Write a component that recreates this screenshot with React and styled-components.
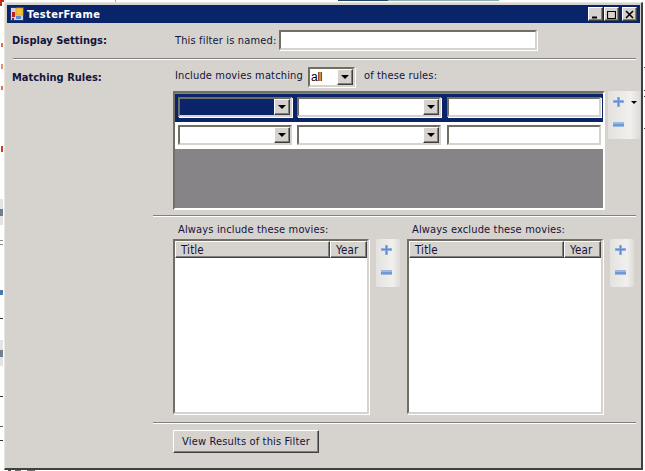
import styled, { createGlobalStyle, css } from 'styled-components'

const GlobalStyle = createGlobalStyle`
	html, body {
		margin: 0;
		height: 100%;
		background: #fff;
		overflow: hidden;
	}
	#root {
		height: 100%;
	}
`

const sunken = css`
	background: #fff;
	border-style: solid;
	border-width: 2px;
	border-color: #716f64 #d6d3ce #d6d3ce #716f64;
	box-shadow: 1px 1px 0 #fff;
	box-sizing: border-box;
`

const raised = css`
	background: #d6d3ce;
	box-sizing: border-box;
	border-style: solid;
	border-width: 1px;
	border-color: #fff #404040 #404040 #fff;
	box-shadow: inset -1px -1px 0 #808080;
`

const Desktop = styled.div`
	position: relative;
	height: 471px;
	width: 645px;
	overflow: hidden;
	padding: 2px 1px 0 4px;
	box-sizing: border-box;
	font-family: "DejaVu Sans", sans-serif;
	font-size: 11px;
	font-stretch: condensed;
	letter-spacing: 0.15px;
	color: #14143a;
`

// bits of whatever window is lying behind this one
const Scrap = styled.i`
	position: absolute;
	left: ${p => p.$x}px;
	top: ${p => p.$y}px;
	width: ${p => p.$w}px;
	height: ${p => p.$h}px;
	background: ${p => p.$c};
`

const scraps = [
	{ x: 0, y: 0, w: 4, h: 2, c: '#c03010' },
	{ x: 0, y: 2, w: 2, h: 4, c: '#c03010' },
	{ x: 1, y: 43, w: 2, h: 4, c: '#d87050' },
	{ x: 1, y: 64, w: 2, h: 5, c: '#e09078' },
	{ x: 1, y: 86, w: 2, h: 4, c: '#d87050' },
	{ x: 1, y: 146, w: 2, h: 6, c: '#c84020' },
	{ x: 0, y: 199, w: 3, h: 26, c: '#e4e4e4' },
	{ x: 0, y: 209, w: 3, h: 7, c: '#708090' },
	{ x: 0, y: 240, w: 3, h: 1, c: '#909090' },
	{ x: 0, y: 244, w: 3, h: 1, c: '#909090' },
	{ x: 0, y: 290, w: 3, h: 5, c: '#5078a8' },
	{ x: 0, y: 318, w: 3, h: 1, c: '#303030' },
	{ x: 0, y: 340, w: 3, h: 26, c: '#e4e4e4' },
	{ x: 0, y: 350, w: 3, h: 7, c: '#708090' },
	{ x: 0, y: 396, w: 3, h: 1, c: '#303030' },
	{ x: 0, y: 426, w: 3, h: 1, c: '#606060' },
	{ x: 0, y: 440, w: 3, h: 1, c: '#303030' },
	{ x: 115, y: 0, w: 1, h: 2, c: '#a0a0a0' },
	{ x: 338, y: 0, w: 50, h: 1, c: '#204868' },
	{ x: 388, y: 0, w: 111, h: 1, c: '#8ab0b8' },
	{ x: 644, y: 67, w: 1, h: 1, c: '#404040' },
	{ x: 644, y: 90, w: 1, h: 1, c: '#404040' },
	{ x: 644, y: 96, w: 1, h: 1, c: '#404040' },
	{ x: 644, y: 128, w: 1, h: 1, c: '#404040' },
	{ x: 8, y: 470, w: 3, h: 1, c: '#505050' },
	{ x: 15, y: 470, w: 6, h: 1, c: '#707070' },
	{ x: 27, y: 470, w: 8, h: 1, c: '#707070' },
]

const Window = styled.div`
	position: relative;
	width: 639px;
	height: 468px;
	box-sizing: border-box;
	background: #d6d3ce;
	border-style: solid;
	border-width: 1px 2px 2px 1px;
	border-color: #e8e6e0 #404040 #404040 #e8e6e0;
	padding: 2px 1px 0 2px;
	display: flex;
	flex-direction: column;
`

const TitleBar = styled.div`
	height: 18px;
	background: #0a246a;
	display: flex;
	align-items: center;
	padding: 0 3px 0 3px;
	gap: 3px;
	flex: none;
`

const AppTitle = styled.span`
	flex: 1;
	color: #fff;
	font-weight: bold;
	font-size: 11px;
	letter-spacing: 0.4px;
`

const CaptionGroup = styled.div`
	display: flex;
	gap: 1px;
`

const Caption = styled.button`
	${raised}
	width: 15px;
	height: 14px;
	padding: 0;
	margin-left: ${p => (p.$gap ? 2 : 0)}px;
	display: flex;
	align-items: center;
	justify-content: center;
`

const Row = styled.div`
	display: flex;
	align-items: center;
	padding-left: 5px;
	padding-top: ${p => p.$top}px;
`

const Heading = styled.span`
	width: 163px;
	flex: none;
	font-weight: bold;
	font-size: 11px;
	letter-spacing: 0;
`

const Label = styled.span`
	white-space: nowrap;
	margin-left: ${p => p.$left || 0}px;
	margin-bottom: ${p => p.$lift || 0}px;
`

const TextInput = styled.div`
	${sunken}
	width: ${p => p.$w}px;
	height: ${p => p.$h || 20}px;
	margin-left: ${p => p.$left || 0}px;
	flex: none;
`

const Divider = styled.div`
	height: 1px;
	background: #808080;
	border-bottom: 1px solid #fff;
	margin-left: ${p => p.$left}px;
	margin-right: 4px;
	margin-top: ${p => p.$top}px;
`

const Dropdown = styled.div`
	${sunken}
	width: ${p => p.$w}px;
	height: 20px;
	margin-left: ${p => p.$left || 0}px;
	display: flex;
	align-items: stretch;
	background: ${p => (p.$selected ? '#0a246a' : '#fff')};
	flex: none;
	padding: 0;
	font-family: "Liberation Sans", sans-serif;
	font-size: 12px;
	font-stretch: normal;
	letter-spacing: -0.2px;
	color: #000;
`

const DropValue = styled.span`
	flex: 1;
	padding: 1px 0 0 1px;
`

const DropButton = styled.span`
	${raised}
	width: 16px;
	display: flex;
	align-items: center;
	justify-content: center;
	&::before {
		content: "";
		border-style: solid;
		border-width: 4px 4px 0;
		border-color: #000 transparent transparent;
	}
`

const RulesArea = styled.div`
	display: flex;
	padding-left: 166px;
	margin-top: 4px;
`

const RulesPanel = styled.div`
	width: 432px;
	height: 119px;
	flex: none;
	box-sizing: border-box;
	background: #868486;
	border-style: solid;
	border-width: 2px;
	border-color: #716f64 #fff #fff #716f64;
	padding-top: 1px;
`

const RuleRow = styled.div`
	height: ${p => (p.$selected ? 28 : 27)}px;
	box-sizing: border-box;
	display: flex;
	gap: 5px;
	padding: 3px 0 0 3px;
	background: ${p => (p.$selected ? '#0a246a' : '#fff')};
`

const Tools = styled.div`
	position: relative;
	width: ${p => p.$w}px;
	height: 48px;
	flex: none;
	margin-left: ${p => p.$left}px;
	border-radius: 2px;
	background: linear-gradient(90deg, #e4e2de, #f2f0ee 70%, #dedcd8);
	display: flex;
	flex-direction: column;
	padding: 6px 0 0 5px;
	box-sizing: border-box;
	gap: 15px;
`

const MenuArrow = styled.span`
	position: absolute;
	top: 10px;
	right: 3px;
	border-style: solid;
	border-width: 3px 3px 0;
	border-color: #000 transparent transparent;
`

const ListsRow = styled.div`
	display: flex;
	padding-left: 166px;
	margin-top: 6px;
`

const ListColumn = styled.div`
	display: flex;
	flex-direction: column;
	width: 196px;
	flex: none;
	margin-left: ${p => p.$left || 0}px;
`

const ListCaption = styled.span`
	padding-left: 5px;
	height: 16px;
	line-height: 14px;
`

const ListBox = styled.div`
	${sunken}
	height: 175px;
`

const ListHeader = styled.div`
	display: flex;
	height: 17px;
	background: #d6d3ce;
`

const HeaderCell = styled.div`
	${raised}
	padding: 1px 0 0 5px;
	font-size: 11.5px;
	flex: ${p => (p.$w ? `0 0 ${p.$w}px` : 1)};
`

const ToolsOffset = styled.div`
	padding-top: 16px;
	flex: none;
`

const ActionButton = styled.button`
	${raised}
	width: 146px;
	height: 23px;
	margin: 6px 0 0 166px;
	padding: 0;
	font: inherit;
	font-stretch: condensed;
	letter-spacing: inherit;
	color: #14143a;
`

const PlusIcon = () => (
	<svg width="11" height="10" viewBox="0 0 11 10" style={{ display: 'block' }}>
		<path d="M4 0h3v3h4v3H7v4H4V6H0V3h4z" fill="#8fb0e0" />
		<path d="M5.5 1v8M1 4.5h9" stroke="#5f8ace" strokeWidth="1" fill="none" />
	</svg>
)

const MinusIcon = () => (
	<svg width="11" height="5" viewBox="0 0 11 5" style={{ display: 'block' }}>
		<rect width="11" height="5" fill="#9ab8e4" />
		<rect y="2" width="11" height="2" fill="#7098d4" />
	</svg>
)

const AppIcon = () => (
	<svg width="14" height="14" viewBox="0 0 14 14" style={{ display: 'block' }}>
		<rect width="14" height="14" fill="#d6d3ce" />
		<rect x="0.5" y="0.5" width="13" height="13" fill="none" stroke="#1a3a7a" />
		<rect x="6" y="1" width="7" height="7" fill="#f2c03c" stroke="#c89020" strokeWidth="0.6" />
		<rect x="2" y="5" width="3" height="5" fill="#c02020" />
		<rect x="6" y="9" width="5" height="3" fill="#5a8ad8" />
		<rect x="2" y="11" width="2" height="2" fill="#404060" />
	</svg>
)

const Glyph = ({ d, width = 1.6 }) => (
	<svg width="9" height="9" viewBox="0 0 9 9">
		<path d={d} fill="none" stroke="#000" strokeWidth={width} />
	</svg>
)

const MovieList = ({ title, left }) => (
	<ListColumn $left={left}>
		<ListCaption>{title}</ListCaption>
		<ListBox>
			<ListHeader>
				<HeaderCell>Title</HeaderCell>
				<HeaderCell $w={37}>Year</HeaderCell>
			</ListHeader>
		</ListBox>
	</ListColumn>
)

const AddRemove = ({ left, w = 24, children }) => (
	<Tools $left={left} $w={w}>
		<PlusIcon />
		<MinusIcon />
		{children}
	</Tools>
)

const Rule = ({ selected }) => (
	<RuleRow $selected={selected}>
		<Dropdown $w={114} $selected={selected}><DropValue /><DropButton /></Dropdown>
		<Dropdown $w={144}><DropValue /><DropButton /></Dropdown>
		<TextInput $w={154} $left={1} />
	</RuleRow>
)

export default function App() {
	return (
		<Desktop>
			<GlobalStyle />
			{scraps.map((s, i) => (
				<Scrap key={i} $x={s.x} $y={s.y} $w={s.w} $h={s.h} $c={s.c} />
			))}
			<Window>
				<TitleBar>
					<AppIcon />
					<AppTitle>TesterFrame</AppTitle>
					<CaptionGroup>
						<Caption><Glyph d="M1 7.5h5" width={2} /></Caption>
						<Caption><Glyph d="M0.5 1.5h8M0.5 1v7.5h8V1" width={1.2} /></Caption>
						<Caption $gap><Glyph d="M1 1l7 7M8 1l-7 7" /></Caption>
					</CaptionGroup>
				</TitleBar>
				<Row $top={7}>
					<Heading>Display Settings:</Heading>
					<Label>This filter is named:</Label>
					<TextInput $w={258} $left={3} />
				</Row>
				<Divider $left={6} $top={8} />
				<Row $top={7}>
					<Heading>Matching Rules:</Heading>
					<Label $lift={4}>Include movies matching</Label>
					<Dropdown $w={47} $left={5}>
						<DropValue>all</DropValue>
						<DropButton />
					</Dropdown>
					<Label $left={9} $lift={4}>of these rules:</Label>
				</Row>
				<RulesArea>
					<RulesPanel>
						<Rule selected />
						<Rule />
					</RulesPanel>
					<AddRemove left={3} w={32}><MenuArrow /></AddRemove>
				</RulesArea>
				<Divider $left={146} $top={5} />
				<ListsRow>
					<MovieList title="Always include these movies:" />
					<ToolsOffset><AddRemove left={7} /></ToolsOffset>
					<MovieList title="Always exclude these movies:" left={7} />
					<ToolsOffset><AddRemove left={7} /></ToolsOffset>
				</ListsRow>
				<Divider $left={146} $top={8} />
				<ActionButton>View Results of this Filter</ActionButton>
			</Window>
		</Desktop>
	)
}
